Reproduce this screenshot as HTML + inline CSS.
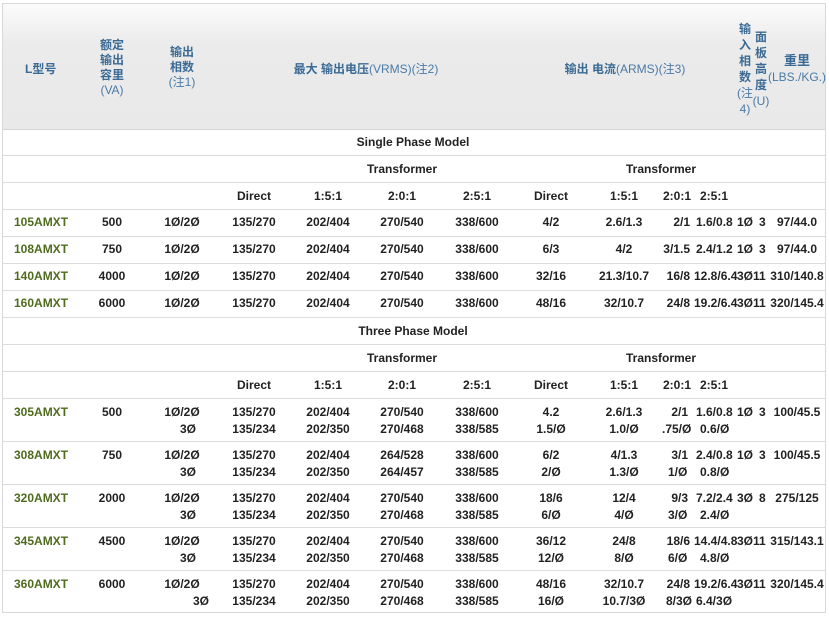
<!DOCTYPE html>
<html><head><meta charset="utf-8"><style>
body{margin:0;background:#fff;width:829px;height:617px;overflow:hidden;position:relative;font-family:"Liberation Sans","Noto Sans CJK SC",sans-serif;font-size:12px;font-weight:bold;color:#222}
.box{position:absolute;left:2px;top:3px;width:822px;height:608px;border:1px solid #d8d8d8}
.hd{position:absolute;left:3px;top:4px;width:822px;height:125px;background:linear-gradient(#fbfbfb 0,#ebebeb 40px,#e9e9e9 100%);border-bottom:1px solid #d6d6d6}
.ln{position:absolute;left:3px;width:822px;height:0;border-top:1px solid #dcdcdc}
i{position:absolute;font-style:normal;white-space:nowrap;line-height:14px}
.c{transform:translateX(-50%)}
.r{transform:translateX(-100%)}
.h{color:#3b6a94}
.h span{font-weight:normal;color:#4a7aa6}
.g{color:#4f6c1e}
.hh{line-height:15px;text-align:center}
</style></head><body>
<div class="box"></div>
<div class="hd"></div>
<i class="h" style="left:25px;top:62px">L型号</i>
<i class="h c hh" style="left:112px;top:38px">额定<br>输出<br>容里<br><span>(VA)</span></i>
<i class="h c hh" style="left:182px;top:45px">输出<br>相数<br><span>(注1)</span></i>
<i class="h c" style="left:366px;top:62px">最大 输出电压<span>(VRMS)(注2)</span></i>
<i class="h c" style="left:625px;top:62px">输出 电流<span>(ARMS)(注3)</span></i>
<i class="h c" style="left:745px;top:21px;line-height:16px;text-align:center">输<br>入<br>相<br>数<br><span>(注<br>4)</span></i>
<i class="h c" style="left:761px;top:29px;line-height:16px;text-align:center">面<br>板<br>高<br>度<br><span>(U)</span></i>
<i class="h c" style="left:797px;top:53px;line-height:16px;text-align:center;font-size:13px">重里<br><span style="font-size:12px">(LBS./KG.)</span></i>

<div class="ln" style="top:155px"></div><div class="ln" style="top:182px"></div><div class="ln" style="top:209px"></div>
<div class="ln" style="top:236px"></div><div class="ln" style="top:263px"></div><div class="ln" style="top:290px"></div>
<div class="ln" style="top:317px"></div><div class="ln" style="top:344px"></div><div class="ln" style="top:371px"></div>
<div class="ln" style="top:398px"></div><div class="ln" style="top:441px"></div><div class="ln" style="top:484px"></div>
<div class="ln" style="top:527px"></div><div class="ln" style="top:570px"></div>

<i class="c" style="left:413px;top:135px">Single Phase Model</i>
<i class="c" style="left:402px;top:162px">Transformer</i><i class="c" style="left:661px;top:162px">Transformer</i>
<i class="c" style="left:254px;top:189px">Direct</i><i class="c" style="left:328px;top:189px">1:5:1</i><i class="c" style="left:402px;top:189px">2:0:1</i><i class="c" style="left:477px;top:189px">2:5:1</i><i class="c" style="left:551px;top:189px">Direct</i><i class="c" style="left:624px;top:189px">1:5:1</i><i class="c" style="left:677px;top:189px">2:0:1</i><i class="c" style="left:714px;top:189px">2:5:1</i>

<i class="g" style="left:14px;top:215px">105AMXT</i><i class="c" style="left:112px;top:215px">500</i><i class="c" style="left:182px;top:215px">1Ø/2Ø</i><i class="c" style="left:254px;top:215px">135/270</i><i class="c" style="left:328px;top:215px">202/404</i><i class="c" style="left:402px;top:215px">270/540</i><i class="c" style="left:477px;top:215px">338/600</i><i class="c" style="left:551px;top:215px">4/2</i><i class="c" style="left:624px;top:215px">2.6/1.3</i><i class="r" style="left:690px;top:215px">2/1</i><i style="left:696px;top:215px">1.6/0.8</i><i style="left:737px;top:215px">1Ø</i><i style="left:759px;top:215px">3</i><i class="c" style="left:797px;top:215px">97/44.0</i>
<i class="g" style="left:14px;top:242px">108AMXT</i><i class="c" style="left:112px;top:242px">750</i><i class="c" style="left:182px;top:242px">1Ø/2Ø</i><i class="c" style="left:254px;top:242px">135/270</i><i class="c" style="left:328px;top:242px">202/404</i><i class="c" style="left:402px;top:242px">270/540</i><i class="c" style="left:477px;top:242px">338/600</i><i class="c" style="left:551px;top:242px">6/3</i><i class="c" style="left:624px;top:242px">4/2</i><i class="r" style="left:690px;top:242px">3/1.5</i><i style="left:696px;top:242px">2.4/1.2</i><i style="left:737px;top:242px">1Ø</i><i style="left:759px;top:242px">3</i><i class="c" style="left:797px;top:242px">97/44.0</i>
<i class="g" style="left:14px;top:269px">140AMXT</i><i class="c" style="left:112px;top:269px">4000</i><i class="c" style="left:182px;top:269px">1Ø/2Ø</i><i class="c" style="left:254px;top:269px">135/270</i><i class="c" style="left:328px;top:269px">202/404</i><i class="c" style="left:402px;top:269px">270/540</i><i class="c" style="left:477px;top:269px">338/600</i><i class="c" style="left:551px;top:269px">32/16</i><i class="c" style="left:624px;top:269px">21.3/10.7</i><i class="r" style="left:690px;top:269px">16/8</i><i style="left:694px;top:269px">12.8/6.4</i><i style="left:737px;top:269px">3Ø11</i><i class="c" style="left:797px;top:269px">310/140.8</i>
<i class="g" style="left:14px;top:296px">160AMXT</i><i class="c" style="left:112px;top:296px">6000</i><i class="c" style="left:182px;top:296px">1Ø/2Ø</i><i class="c" style="left:254px;top:296px">135/270</i><i class="c" style="left:328px;top:296px">202/404</i><i class="c" style="left:402px;top:296px">270/540</i><i class="c" style="left:477px;top:296px">338/600</i><i class="c" style="left:551px;top:296px">48/16</i><i class="c" style="left:624px;top:296px">32/10.7</i><i class="r" style="left:690px;top:296px">24/8</i><i style="left:694px;top:296px">19.2/6.4</i><i style="left:737px;top:296px">3Ø11</i><i class="c" style="left:797px;top:296px">320/145.4</i>

<i class="c" style="left:413px;top:324px">Three Phase Model</i>
<i class="c" style="left:402px;top:351px">Transformer</i><i class="c" style="left:661px;top:351px">Transformer</i>
<i class="c" style="left:254px;top:378px">Direct</i><i class="c" style="left:328px;top:378px">1:5:1</i><i class="c" style="left:402px;top:378px">2:0:1</i><i class="c" style="left:477px;top:378px">2:5:1</i><i class="c" style="left:551px;top:378px">Direct</i><i class="c" style="left:624px;top:378px">1:5:1</i><i class="c" style="left:677px;top:378px">2:0:1</i><i class="c" style="left:714px;top:378px">2:5:1</i>

<i class="g" style="left:14px;top:405px">305AMXT</i><i class="c" style="left:112px;top:405px">500</i><i class="c" style="left:182px;top:405px">1Ø/2Ø</i><i class="c" style="left:188px;top:422px">3Ø</i><i class="c" style="left:254px;top:405px">135/270</i><i class="c" style="left:254px;top:422px">135/234</i><i class="c" style="left:328px;top:405px">202/404</i><i class="c" style="left:328px;top:422px">202/350</i><i class="c" style="left:402px;top:405px">270/540</i><i class="c" style="left:402px;top:422px">270/468</i><i class="c" style="left:477px;top:405px">338/600</i><i class="c" style="left:477px;top:422px">338/585</i><i class="c" style="left:551px;top:405px">4.2</i><i class="c" style="left:551px;top:422px">1.5/Ø</i><i class="c" style="left:624px;top:405px">2.6/1.3</i><i class="c" style="left:624px;top:422px">1.0/Ø</i><i class="r" style="left:688px;top:405px">2/1</i><i style="left:662px;top:422px">.75/Ø</i><i style="left:696px;top:405px">1.6/0.8</i><i style="left:700px;top:422px">0.6/Ø</i><i style="left:737px;top:405px">1Ø</i><i style="left:759px;top:405px">3</i><i class="c" style="left:797px;top:405px">100/45.5</i>
<i class="g" style="left:14px;top:448px">308AMXT</i><i class="c" style="left:112px;top:448px">750</i><i class="c" style="left:182px;top:448px">1Ø/2Ø</i><i class="c" style="left:188px;top:465px">3Ø</i><i class="c" style="left:254px;top:448px">135/270</i><i class="c" style="left:254px;top:465px">135/234</i><i class="c" style="left:328px;top:448px">202/404</i><i class="c" style="left:328px;top:465px">202/350</i><i class="c" style="left:402px;top:448px">264/528</i><i class="c" style="left:402px;top:465px">264/457</i><i class="c" style="left:477px;top:448px">338/600</i><i class="c" style="left:477px;top:465px">338/585</i><i class="c" style="left:551px;top:448px">6/2</i><i class="c" style="left:551px;top:465px">2/Ø</i><i class="c" style="left:624px;top:448px">4/1.3</i><i class="c" style="left:624px;top:465px">1.3/Ø</i><i class="r" style="left:688px;top:448px">3/1</i><i style="left:668px;top:465px">1/Ø</i><i style="left:696px;top:448px">2.4/0.8</i><i style="left:700px;top:465px">0.8/Ø</i><i style="left:737px;top:448px">1Ø</i><i style="left:759px;top:448px">3</i><i class="c" style="left:797px;top:448px">100/45.5</i>
<i class="g" style="left:14px;top:491px">320AMXT</i><i class="c" style="left:112px;top:491px">2000</i><i class="c" style="left:182px;top:491px">1Ø/2Ø</i><i class="c" style="left:188px;top:508px">3Ø</i><i class="c" style="left:254px;top:491px">135/270</i><i class="c" style="left:254px;top:508px">135/234</i><i class="c" style="left:328px;top:491px">202/404</i><i class="c" style="left:328px;top:508px">202/350</i><i class="c" style="left:402px;top:491px">270/540</i><i class="c" style="left:402px;top:508px">270/468</i><i class="c" style="left:477px;top:491px">338/600</i><i class="c" style="left:477px;top:508px">338/585</i><i class="c" style="left:551px;top:491px">18/6</i><i class="c" style="left:551px;top:508px">6/Ø</i><i class="c" style="left:624px;top:491px">12/4</i><i class="c" style="left:624px;top:508px">4/Ø</i><i class="r" style="left:688px;top:491px">9/3</i><i style="left:668px;top:508px">3/Ø</i><i style="left:696px;top:491px">7.2/2.4</i><i style="left:700px;top:508px">2.4/Ø</i><i style="left:737px;top:491px">3Ø</i><i style="left:759px;top:491px">8</i><i class="c" style="left:797px;top:491px">275/125</i>
<i class="g" style="left:14px;top:534px">345AMXT</i><i class="c" style="left:112px;top:534px">4500</i><i class="c" style="left:182px;top:534px">1Ø/2Ø</i><i class="c" style="left:188px;top:551px">3Ø</i><i class="c" style="left:254px;top:534px">135/270</i><i class="c" style="left:254px;top:551px">135/234</i><i class="c" style="left:328px;top:534px">202/404</i><i class="c" style="left:328px;top:551px">202/350</i><i class="c" style="left:402px;top:534px">270/540</i><i class="c" style="left:402px;top:551px">270/468</i><i class="c" style="left:477px;top:534px">338/600</i><i class="c" style="left:477px;top:551px">338/585</i><i class="c" style="left:551px;top:534px">36/12</i><i class="c" style="left:551px;top:551px">12/Ø</i><i class="c" style="left:624px;top:534px">24/8</i><i class="c" style="left:624px;top:551px">8/Ø</i><i class="r" style="left:690px;top:534px">18/6</i><i style="left:668px;top:551px">6/Ø</i><i style="left:694px;top:534px">14.4/4.8</i><i style="left:700px;top:551px">4.8/Ø</i><i style="left:737px;top:534px">3Ø11</i><i class="c" style="left:797px;top:534px">315/143.1</i>
<i class="g" style="left:14px;top:577px">360AMXT</i><i class="c" style="left:112px;top:577px">6000</i><i class="c" style="left:182px;top:577px">1Ø/2Ø</i><i class="c" style="left:201px;top:594px">3Ø</i><i class="c" style="left:254px;top:577px">135/270</i><i class="c" style="left:254px;top:594px">135/234</i><i class="c" style="left:328px;top:577px">202/404</i><i class="c" style="left:328px;top:594px">202/350</i><i class="c" style="left:402px;top:577px">270/540</i><i class="c" style="left:402px;top:594px">270/468</i><i class="c" style="left:477px;top:577px">338/600</i><i class="c" style="left:477px;top:594px">338/585</i><i class="c" style="left:551px;top:577px">48/16</i><i class="c" style="left:551px;top:594px">16/Ø</i><i class="c" style="left:624px;top:577px">32/10.7</i><i class="c" style="left:624px;top:594px">10.7/3Ø</i><i class="r" style="left:690px;top:577px">24/8</i><i style="left:666px;top:594px">8/3Ø</i><i style="left:694px;top:577px">19.2/6.4</i><i style="left:696px;top:594px">6.4/3Ø</i><i style="left:737px;top:577px">3Ø11</i><i class="c" style="left:797px;top:577px">320/145.4</i>
</body></html>
